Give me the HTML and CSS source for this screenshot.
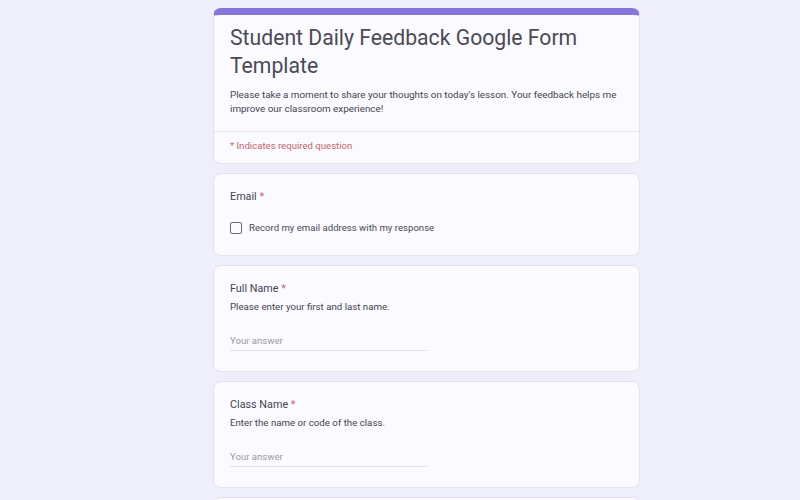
FILE: index.html
```html
<!DOCTYPE html>
<html>
<head>
<meta charset="utf-8">
<link rel="stylesheet" href="styles.css">
</head>
<body>
<main class="form">
  <section class="card header">
    <div class="header-main">
      <h1 class="title">Student Daily Feedback Google Form Template</h1>
      <p class="desc">Please take a moment to share your thoughts on today's lesson. Your feedback helps me improve our classroom experience!</p>
    </div>
    <div class="required-note">* Indicates required question</div>
  </section>

  <section class="card question q-email">
    <div class="label">Email <span class="star">*</span></div>
    <label class="check-row">
      <span class="checkbox"></span>
      <span class="check-text">Record my email address with my response</span>
    </label>
  </section>

  <section class="card question q-text">
    <div class="label">Full Name <span class="star">*</span></div>
    <div class="help">Please enter your first and last name.</div>
    <div class="answer">Your answer</div>
  </section>

  <section class="card question q-text">
    <div class="label">Class Name <span class="star">*</span></div>
    <div class="help">Enter the name or code of the class.</div>
    <div class="answer">Your answer</div>
  </section>

  <section class="card question q-text"></section>
</main>
</body>
</html>
```
FILE: styles.css
```css
html, body {
  margin: 0;
  padding: 0;
  background: #efeefb;
  font-family: Roboto, "Liberation Sans", Arial, sans-serif;
  color: #3c3c44;
}

.form {
  width: 427px;
  margin: 8px 0 0 213px;
  display: flex;
  flex-direction: column;
  gap: 9px;
}

.card {
  background: #fafaff;
  border: 1px solid #e3e2ef;
  border-radius: 8px;
  box-sizing: border-box;
}

.header {
  border-top: 7px solid #8576db;
}

.header-main {
  padding: 9px 16px 15px 16px;
  border-bottom: 1px solid #e3e2ef;
}

.title {
  margin: 0;
  font-size: 21.2px;
  line-height: 28px;
  font-weight: 400;
  color: #4b4b54;
}

.desc {
  margin: 8px 0 0 0;
  font-size: 9.85px;
  line-height: 14px;
  color: #45454d;
}

.required-note {
  padding: 7px 16px 10px 16px;
  font-size: 9.6px;
  line-height: 14px;
  color: #c9656c;
}

.question {
  padding: 15px 16px 0 16px;
}

.q-email { height: 83px; }
.q-text { height: 107px; }

.label {
  font-size: 10.8px;
  line-height: 16px;
  color: #45454d;
}

.star { color: #d0646c; }

.check-row {
  display: flex;
  align-items: center;
  gap: 7px;
  margin-top: 16px;
}

.checkbox {
  width: 10px;
  height: 10px;
  border: 1.5px solid #6a6a72;
  border-radius: 2px;
  flex: none;
}

.check-text {
  font-size: 9.6px;
  line-height: 13px;
  color: #4a4a52;
}

.help {
  margin-top: 3px;
  font-size: 9.7px;
  line-height: 14px;
  color: #45454d;
}

.answer {
  margin-top: 20px;
  width: 197px;
  padding-bottom: 2px;
  border-bottom: 1px solid #e3e2ea;
  font-size: 9.6px;
  line-height: 14px;
  color: #9a9aa2;
}
```
